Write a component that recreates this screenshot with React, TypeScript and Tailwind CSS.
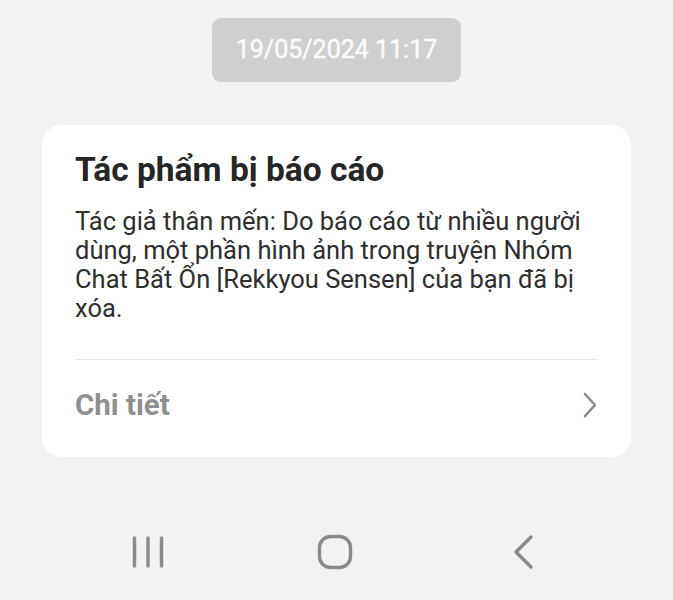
import React from 'react';

const NavBar = () => (
  <div className="flex items-center pl-[131px] pt-[76px] text-[#8a8a8a]">
    <svg width="34" height="34" viewBox="0 0 34 34">
      <g stroke="currentColor" strokeWidth="3.4" strokeLinecap="round">
        <line x1="3.5" y1="3" x2="3.5" y2="31" />
        <line x1="17" y1="3" x2="17" y2="31" />
        <line x1="30.5" y1="3" x2="30.5" y2="31" />
      </g>
    </svg>
    <svg width="38" height="38" viewBox="0 0 38 38" className="ml-[151px]">
      <rect x="3.5" y="3.5" width="31" height="31" rx="11" fill="none" stroke="currentColor" strokeWidth="3.4" />
    </svg>
    <svg width="24" height="36" viewBox="0 0 24 36" className="ml-[158px]">
      <path d="M19 3 L4 18 L19 33" fill="none" stroke="currentColor" strokeWidth="3.4" strokeLinecap="round" strokeLinejoin="round" />
    </svg>
  </div>
);

export default function App() {
  return (
    <div className="h-[600px] w-[673px] overflow-hidden bg-[#f2f2f2] font-['Roboto',sans-serif]">
      <div className="flex justify-center pt-[18px]">
        <div className="flex h-[64px] w-[249px] items-center justify-center rounded-[9px] bg-[#d0d0d0] text-[25px] text-[#fafafa] [-webkit-text-stroke:0.4px_#fafafa]">
          19/05/2024 11:17
        </div>
      </div>

      <div className="mx-[42px] mt-[43px] rounded-[20px] bg-white px-[33px] pt-[25px]">
        <h1 className="text-[33.5px] leading-[40px] font-bold text-[#262626]">Tác phẩm bị báo cáo</h1>
        <p className="mt-[17px] text-[25.5px] leading-[29px] text-[#2e2e2e]">
          Tác giả thân mến: Do báo cáo từ nhiều người dùng, một phần hình ảnh trong truyện Nhóm Chat Bất Ổn [Rekkyou Sensen] của bạn đã bị xóa.
        </p>
        <div className="mt-[36px] h-px bg-[#e6e6e6]" />
        <div className="flex h-[97px] items-center justify-between pb-[7px]">
          <span className="text-[29.5px] font-bold text-[#8f8f8f]">Chi tiết</span>
          <svg width="16" height="26" viewBox="0 0 16 26" className="text-[#8a8a8a]">
            <path d="M3 2 L13 13 L3 24" fill="none" stroke="currentColor" strokeWidth="2.6" strokeLinecap="round" strokeLinejoin="round" />
          </svg>
        </div>
      </div>

      <NavBar />
    </div>
  );
}
